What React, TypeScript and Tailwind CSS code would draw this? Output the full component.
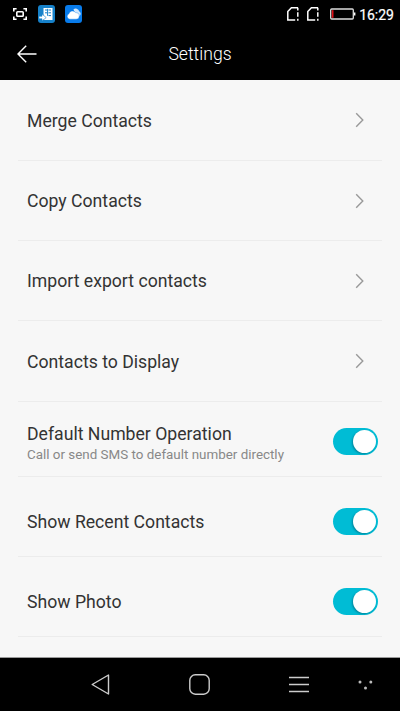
import React, { useState } from 'react';

const linkItems = [
  { title: 'Merge Contacts', rowClass: 'h-[81px]', titleClass: 'pt-[2px]' },
  { title: 'Copy Contacts', rowClass: 'h-[80px]', titleClass: 'pt-px' },
  { title: 'Import export contacts', rowClass: 'h-[80px]', titleClass: 'pt-px' },
  { title: 'Contacts to Display', rowClass: 'h-[81px]', titleClass: 'pt-[2px]' },
];

const toggleItems = [
  {
    title: 'Default Number Operation',
    description: 'Call or send SMS to default number directly',
    rowClass: 'h-[75px] pt-[4px]',
    textClass: 'pt-[3px]',
  },
  { title: 'Show Recent Contacts', rowClass: 'h-[80px] pt-[9px]', textClass: 'pt-px' },
  { title: 'Show Photo', rowClass: 'h-[80px] pt-[9px]', textClass: 'pt-px' },
];

interface SwitchProps {
  label: string;
}

const Switch: React.FC<SwitchProps> = ({ label }) => {
  const [on, setOn] = useState(true);

  return (
    <button
      role="switch"
      aria-checked={on}
      aria-label={label}
      onClick={() => setOn(!on)}
      className={`mr-1 flex h-[27px] w-[45px] shrink-0 items-center rounded-full px-0.5 ${
        on ? 'justify-end bg-[#00bcd5]' : 'justify-start bg-[#c4c4c4]'
      }`}
    >
      <span className="h-[23px] w-[23px] rounded-full bg-white shadow-[-1px_1px_2px_rgba(0,70,90,0.45)]" />
    </button>
  );
};

const SimIcon = () => (
  <svg width="12" height="14" viewBox="0 0 12 14" fill="none" stroke="#fff" strokeWidth="1.5">
    <path d="M8.2 13.1H.8V4.6L4.4.8H11" />
    <path d="M10.8.8v2.6M10.8 5.2v4.6M10.8 11.8v2" />
  </svg>
);

const StatusBar = () => (
  <div className="flex h-7 items-center justify-between pl-[13px] pr-[6px]">
    <div className="flex items-center">
      <svg width="14" height="12" viewBox="0 0 14 12" fill="none" stroke="#fff" strokeWidth="1.6">
        <path d="M.8 3.6V.8h2.8M10.4.8h2.8v2.8M13.2 8.4v2.8h-2.8M3.6 11.2H.8V8.4" />
        <rect x="3.8" y="3.8" width="6.4" height="4.4" rx=".8" />
      </svg>
      <svg className="ml-[11px]" width="17" height="18" viewBox="0 0 17 18">
        <rect width="17" height="18" rx="3" fill="#1681c9" />
        <path d="M5.5 3h9v12H6v-2.4L5.5 9z" fill="#fff" />
        <path d="M7 5h2M10.5 5h2.5M7 7.8h2M10.5 7.8h2.5M10.5 10.6h2.5M9.6 3.8v7" stroke="#1681c9" strokeWidth="1" />
        <path d="M1 11.2h3V9l4.2 3.6L4 16v-2.2H1z" fill="#fff" stroke="#1681c9" strokeWidth=".6" />
      </svg>
      <svg className="ml-[10px]" width="17" height="18" viewBox="0 0 17 18">
        <rect width="17" height="18" rx="3" fill="#087bea" />
        <path d="M8.4 4.6a3.5 3.5 0 0 1 5.8 1.6c1.8 1 2 3.4.5 4.8L10 8z" fill="#d2e7fc" />
        <path
          d="M4.8 14.2a2.8 2.8 0 0 1-.9-5.4 3.7 3.7 0 0 1 6.7-1.2c2.2-.2 3.7 1.3 3.7 3.3s-1.4 3.3-3.2 3.3z"
          fill="#fff"
          stroke="#087bea"
          strokeWidth=".4"
        />
      </svg>
    </div>
    <div className="flex items-center">
      <SimIcon />
      <span className="w-2" />
      <SimIcon />
      <svg className="ml-[11px]" width="26" height="12" viewBox="0 0 26 12">
        <rect x=".7" y="1" width="22.6" height="10" rx="1" fill="none" stroke="#ddd" strokeWidth="1.3" />
        <rect x="1.8" y="2.2" width="1.7" height="7.6" fill="#e00f16" />
        <path d="M24 4.4h1.4v3.2H24z" fill="#fff" />
      </svg>
      <span className="ml-[3px] pt-px text-[14px] leading-none text-white [-webkit-text-stroke:0.2px_white]">16:29</span>
    </div>
  </div>
);

const NavBar = () => (
  <nav className="flex h-[53px] items-center pl-[91px]">
    <button aria-label="Back">
      <svg width="19" height="21" viewBox="0 0 19 21" fill="none" stroke="#ccc" strokeWidth="1.4" strokeLinejoin="round">
        <path d="M17.5 1v19L1.2 10.5z" />
      </svg>
    </button>
    <button aria-label="Home" className="ml-[79px]">
      <svg width="21" height="21" viewBox="0 0 21 21" fill="none" stroke="#ccc" strokeWidth="1.4">
        <rect x=".8" y=".8" width="19.4" height="19.4" rx="5.5" />
      </svg>
    </button>
    <button aria-label="Menu" className="ml-[79px]">
      <svg width="20" height="17" viewBox="0 0 20 17" stroke="#ccc" strokeWidth="1.6">
        <path d="M0 1.5h20M0 8.5h20M0 15.5h20" />
      </svg>
    </button>
    <button aria-label="Hide navigation" className="ml-[49px]">
      <svg width="15" height="10" viewBox="0 0 15 10" fill="#bbb">
        <circle cx="2" cy="2" r="1.5" />
        <circle cx="12.8" cy="2" r="1.5" />
        <circle cx="7.5" cy="8" r="1.5" />
      </svg>
    </button>
  </nav>
);

export default function App() {
  return (
    <div className="flex h-[711px] w-[400px] flex-col bg-black font-['Roboto',sans-serif]">
      <StatusBar />

      <header className="grid h-[52px] grid-cols-[1fr_auto_1fr] items-center pl-[17px] pr-[17px]">
        <button aria-label="Go back" className="justify-self-start">
          <svg width="20" height="18" viewBox="0 0 20 18" fill="none" stroke="#fff" strokeWidth="1.4">
            <path d="M9.2.8L1 9l8.2 8.2M1 9h18.5" />
          </svg>
        </button>
        <h1 className="text-[17.6px] font-light leading-6 text-white">Settings</h1>
      </header>

      <main className="flex-1 border-b border-[#9a9a9a] bg-[#f7f7f7] pl-[18px] pr-[18px]">
        {linkItems.map((item) => (
          <div
            key={item.title}
            className={`flex items-center justify-between border-b border-[#ececec] pl-[9px] pr-[17px] ${item.rowClass}`}
          >
            <span className={`text-[17.65px] leading-6 text-[#333] ${item.titleClass}`}>{item.title}</span>
            <svg width="10" height="16" viewBox="0 0 10 16" fill="none" stroke="#999" strokeWidth="1.4">
              <path d="M1.2 1.2L7.8 8l-6.6 6.8" />
            </svg>
          </div>
        ))}

        {toggleItems.map((item) => (
          <div
            key={item.title}
            className={`flex items-center justify-between border-b border-[#ececec] pl-[9px] ${item.rowClass}`}
          >
            <div className={item.textClass}>
              <div className="text-[17.65px] leading-6 text-[#333]">{item.title}</div>
              {item.description && (
                <div className="text-[13.4px] leading-[18px] text-[#888]">{item.description}</div>
              )}
            </div>
            <Switch label={item.title} />
          </div>
        ))}
      </main>

      <NavBar />
    </div>
  );
}
